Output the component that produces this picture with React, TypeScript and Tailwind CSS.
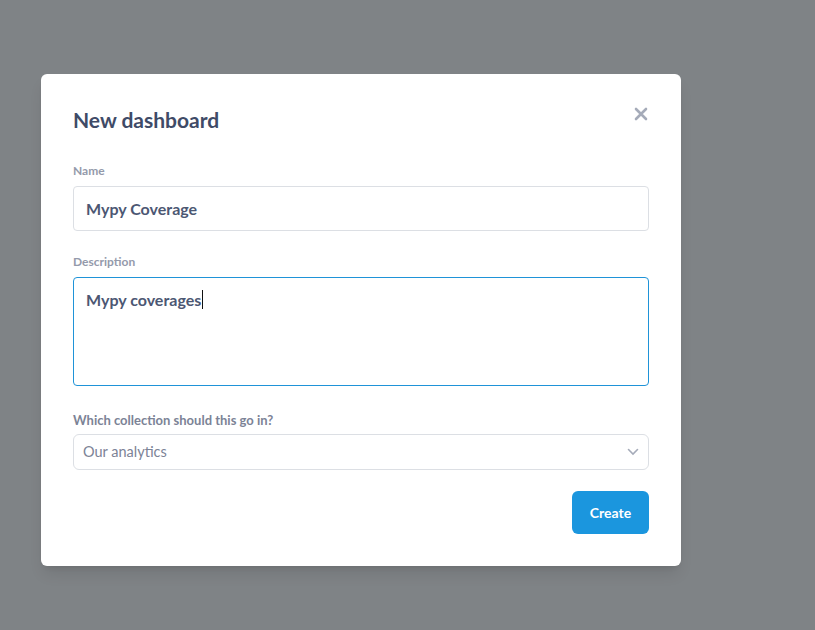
export default function App() {
    return (
        <div
            className="min-h-[630px] w-full bg-[#7f8386] pt-[74px] pl-[41px]"
            style={{ fontFamily: "Lato, 'Open Sans', sans-serif" }}
        >
            <div className="w-[640px] rounded-md bg-white px-8 pt-8 pb-8 shadow-lg">
                {/* header */}
                <div className="flex items-start justify-between">
                    <h2 className="text-[21px] leading-7 font-bold text-[#3f4b67]">New dashboard</h2>
                    <button className="mt-[1px] mr-[1px] text-[#a5abb9]" aria-label="Close">
                        <svg width="14" height="14" viewBox="0 0 14 14">
                            <path d="M2 2L12 12M12 2L2 12" stroke="currentColor" strokeWidth="2.6" strokeLinecap="round" />
                        </svg>
                    </button>
                </div>

                {/* name */}
                <label className="mt-[29px] block text-[12px] leading-4 font-bold text-[#949aab]">Name</label>
                <div className="mt-[7px] flex h-[45px] items-center rounded border border-[#dcdfe4] px-3 text-[16px] font-bold text-[#4c5773]">
                    Mypy Coverage
                </div>

                {/* description */}
                <label className="mt-[23px] block text-[12px] leading-4 font-bold text-[#949aab]">Description</label>
                <div className="mt-[7px] h-[109px] rounded border border-[#1f93d8] px-3 pt-[9px] text-[16px] leading-6 font-bold text-[#4c5773]">
                    Mypy coverages<span className="ml-[1px] inline-block h-[19px] w-[1px] translate-y-[3px] bg-[#111]" />
                </div>

                {/* collection */}
                <label className="mt-[26px] block text-[13px] leading-4 font-bold text-[#7c8396]">Which collection should this go in?</label>
                <div className="mt-[6px] flex h-[36px] items-center justify-between rounded-md border border-[#dcdfe4] pr-[9px] pl-[9px] text-[14.5px] text-[#7c8396]">
                    <span>Our analytics</span>
                    <svg width="12" height="8" viewBox="0 0 12 8" className="text-[#a5abb9]">
                        <path d="M1.5 1.5L6 6L10.5 1.5" fill="none" stroke="currentColor" strokeWidth="1.6" strokeLinecap="round" />
                    </svg>
                </div>

                {/* footer */}
                <div className="mt-[21px] flex justify-end">
                    <button className="h-[43px] w-[77px] rounded-md bg-[#1b96de] text-[14px] font-bold text-white">Create</button>
                </div>
            </div>
        </div>
    );
}
